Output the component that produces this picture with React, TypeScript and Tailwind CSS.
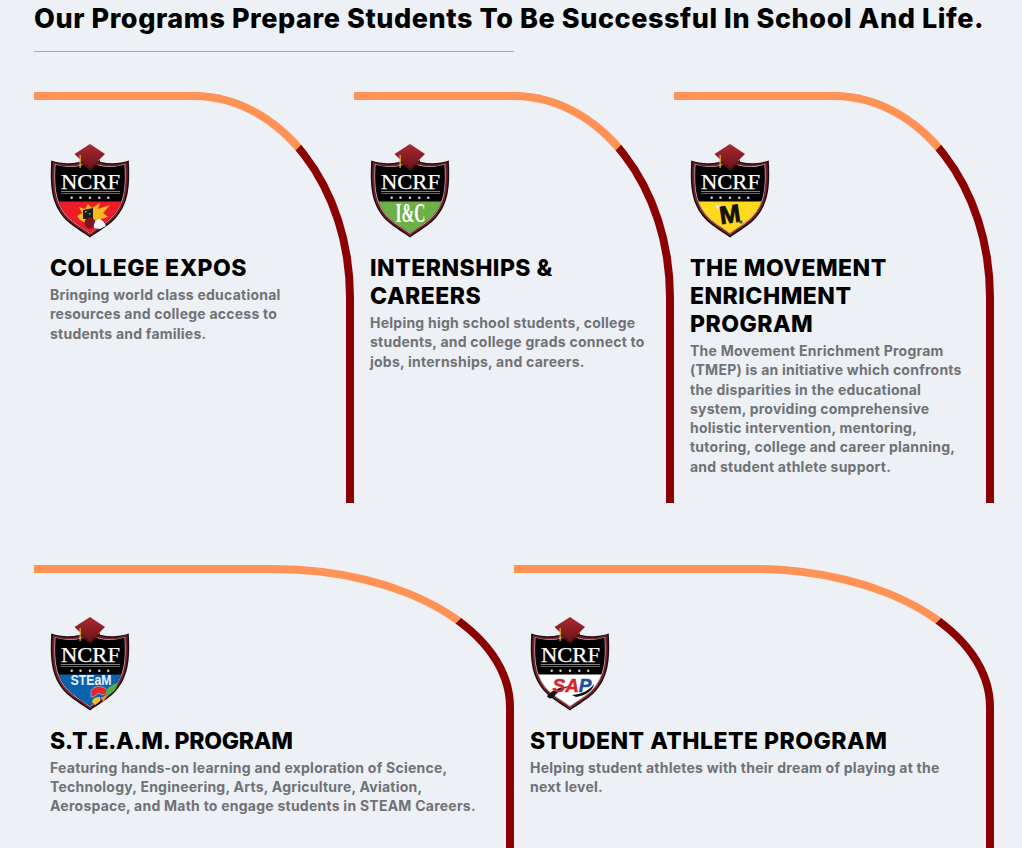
import React from "react";

type Variant = "expo" | "intern" | "move" | "steam" | "sap";

const bandColor: Record<Variant, string> = {
  expo: "#ee1c25",
  intern: "#6db048",
  move: "#ffd91f",
  steam: "#0b63ae",
  sap: "#ffffff",
};

const shieldPath =
  "M1.2 17.5 C 14 22, 28 21, 40 15 C 52 21, 66 22, 78.8 17.5 C 80 42, 79.5 62, 63 78 C 55 85, 46 90, 40 94.5 C 34 90, 25 85, 17 78 C 0.5 62, 0 42, 1.2 17.5 Z";

function Badge({ variant }: { variant: Variant }) {
  return (
    <>
      {variant === "expo" && (
        <g>
          <path d="M27 73 L32 70 L29 64 L35 66 L38 61 L42 65 L50 60 L48 66 L60 62 L53 70 L58 74 L51 76 L47 84 L36 80 L30 77 Z" fill="#f6b824" />
          <path d="M33 67 L43 65 L43 76 L33 76 Z" fill="#1d1d1d" />
          <rect x="35" y="68" width="1.4" height="1.4" fill="#f6b824" />
          <rect x="39" y="70" width="1.4" height="1.4" fill="#f6b824" />
          <circle cx="40" cy="80" r="5.5" fill="#7d1520" />
          <path d="M44 85 C 43 80, 46 77, 49 76 L53 78 L56 83 L50 86 Z" fill="#f2f5fa" />
        </g>
      )}
      {variant === "intern" && (
        <text x="40.5" y="79" textAnchor="middle" fontFamily="'Liberation Serif', serif" fontWeight="700" fontSize="27" fill="#ffffff" textLength="30" lengthAdjust="spacingAndGlyphs">
          I&amp;C
        </text>
      )}
      {variant === "move" && (
        <>
          <path d="M25 61 L28 63 L32 62 L30 65 L28 66 L26 64 Z" fill="#e8e8e8" />
          <text x="40" y="80" textAnchor="middle" transform="rotate(-8 40 72)" fontFamily="'Liberation Sans', sans-serif" fontWeight="700" fontSize="25" fill="#111111" stroke="#111111" strokeWidth="0.8">
            M
          </text>
          <circle cx="51" cy="79" r="1.7" fill="#555" />
        </>
      )}
      {variant === "steam" && (
        <g>
          <text x="41" y="69" textAnchor="middle" fontFamily="'Liberation Sans', sans-serif" fontWeight="700" fontSize="14" fill="#e6f1fb" textLength="41" lengthAdjust="spacingAndGlyphs">
            STEaM
          </text>
          <path d="M41 75 C 44 69, 53 69, 57 74 C 58 79, 52 80, 49 77 C 47 78, 45 81, 41 81 Z" fill="#e3262b" stroke="#ffffff" strokeWidth="0.4" />
          <path d="M56 74 C 59 71, 63 68, 67.5 67 C 67.5 72, 62 78, 57 80 Z" fill="#53ad49" />
          <path d="M42 86 C 43 82, 46 81, 50 81 L50 85 L45 89 Z" fill="#f4c21f" />
          <path d="M51 81 C 54 81, 56 79, 58 79 L53 86 Z" fill="#f08a24" />
        </g>
      )}
      {variant === "sap" && (
        <g>
          <path d="M17 80 C 22 74, 30 71, 40 70 C 32 73, 26 77, 24 81 C 22 83, 18 83, 17 80 Z" fill="#111111" />
          <path d="M42 79 C 52 78, 60 74, 64 68 C 64 73, 56 80, 46 81 Z" fill="#111111" />
          <text x="42" y="76" textAnchor="middle" fontFamily="'Liberation Sans', sans-serif" fontStyle="italic" fontWeight="700" fontSize="19" fill="#d8232a" stroke="#d8232a" strokeWidth="0.5">
            SA
            <tspan fill="#1d4f9c" stroke="#1d4f9c">P</tspan>
          </text>
        </g>
      )}
    </>
  );
}

function Logo({ variant }: { variant: Variant }) {
  const clipId = `shield-${variant}`;
  return (
    <svg viewBox="0 0 80 95" className="block w-20 h-[95px]">
      <defs>
        <clipPath id={clipId}>
          <path d={shieldPath} transform="translate(40 54) scale(0.89) translate(-40 -54)" />
        </clipPath>
        <linearGradient id={`cap-${variant}`} x1="0" y1="0" x2="0" y2="1">
          <stop offset="0" stopColor="#a82a33" />
          <stop offset="1" stopColor="#6d1219" />
        </linearGradient>
      </defs>
      <path d={shieldPath} fill="#1a0c0e" />
      <path d={shieldPath} transform="translate(40 54) scale(0.96) translate(-40 -54)" fill="#7a1f2b" />
      <path d={shieldPath} transform="translate(40 54) scale(0.905) translate(-40 -54)" fill="#d9cfd0" />
      <g clipPath={`url(#${clipId})`}>
        <rect x="0" y="0" width="80" height="95" fill="#000000" />
        <rect x="0" y="58.5" width="80" height="37" fill={bandColor[variant]} />
      </g>
      <Badge variant={variant} />
      <text x="40.5" y="46" textAnchor="middle" fontFamily="'Liberation Serif', serif" fontSize="22" fill="#ffffff" stroke="#ffffff" strokeWidth="0.25" textLength="59" lengthAdjust="spacingAndGlyphs">
        NCRF
      </text>
      <rect x="11" y="48" width="59" height="0.7" fill="#b9b9b9" />
      <rect x="11" y="50" width="59" height="0.7" fill="#8f8f8f" />
      {[21.7, 30.5, 40, 49.3, 58.3].map((x) => (
        <circle key={x} cx={x} cy="54.7" r="1.2" fill="#dddddd" />
      ))}
      {/* graduation cap */}
      <path d="M24.5 11 L40 1 L55 11 L40 26 Z" fill={`url(#cap-${variant})`} />
      <path d="M30 16.5 L40 26 L50 16.5 L50 19 L40 27.5 L30 19 Z" fill="#5d0f15" />
      <rect x="29.5" y="12" width="1.2" height="13" fill="#e9c32a" />
    </svg>
  );
}

const programs: { variant: Variant; title: string; text: string; wide?: boolean }[] = [
  {
    variant: "expo",
    title: "COLLEGE EXPOS",
    text: "Bringing world class educational resources and college access to students and families.",
  },
  {
    variant: "intern",
    title: "INTERNSHIPS & CAREERS",
    text: "Helping high school students, college students, and college grads connect to jobs, internships, and careers.",
  },
  {
    variant: "move",
    title: "THE MOVEMENT ENRICHMENT PROGRAM",
    text: "The Movement Enrichment Program (TMEP) is an initiative which confronts the disparities in the educational system, providing comprehensive holistic intervention, mentoring, tutoring, college and career planning, and student athlete support.",
  },
  {
    variant: "steam",
    title: "S.T.E.A.M. PROGRAM",
    text: "Featuring hands-on learning and exploration of Science, Technology, Engineering, Arts, Agriculture, Aviation, Aerospace, and Math to engage students in STEAM Careers.",
    wide: true,
  },
  {
    variant: "sap",
    title: "STUDENT ATHLETE PROGRAM",
    text: "Helping student athletes with their dream of playing at the next level.",
    wide: true,
  },
];

export default function App() {
  return (
    <div className="h-[848px] overflow-hidden bg-[#edf0f5] font-['Inter',sans-serif]">
      <div className="w-[960px] ml-[34px]">
        <h1 className="pt-[4px] text-[27px] leading-[30px] tracking-[0.57px] font-extrabold text-black whitespace-nowrap">
          Our Programs Prepare Students To Be Successful In School And Life.
        </h1>
        <div className="w-[480px] h-px bg-[#a9abae] mt-[17px] mb-[40px]"></div>

        <div className="grid grid-cols-6 gap-y-[62px]">
          {programs.map((p) => (
            <div
              key={p.variant}
              className={`${p.wide ? "col-span-3 pb-[33px]" : "col-span-2 pb-[27px]"} border-t-8 border-r-8 border-t-[#ff9254] border-r-[#8b0000] rounded-tr-[50%] px-4 pt-[43px]`}
            >
              <Logo variant={p.variant} />
              <h2
                className={`mt-[16px] text-[23px] leading-[28px] font-extrabold text-black ${
                  p.variant === "steam" ? "tracking-[-0.25px]" : "tracking-[0.48px]"
                }`}
              >
                {p.title}
              </h2>
              <p className="mt-[3px] text-[14px] leading-[19.25px] tracking-[0.24px] font-bold text-[#6f7276]">{p.text}</p>
            </div>
          ))}
        </div>
      </div>
    </div>
  );
}
